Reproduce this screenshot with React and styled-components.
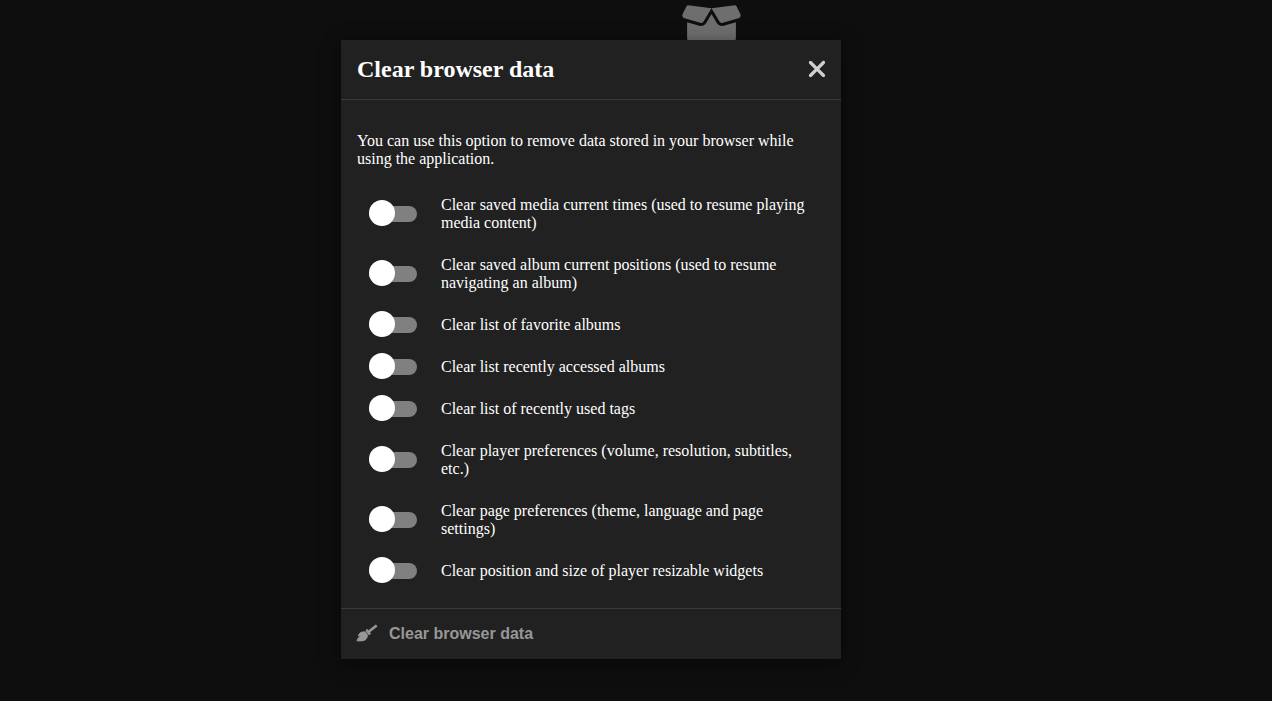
import React, { useState } from "react";
import styled, { createGlobalStyle } from "styled-components";
import { FaBroom } from "react-icons/fa";
import { FaBoxOpen, FaXmark } from "react-icons/fa6";

const GlobalStyle = createGlobalStyle`
  *, *::before, *::after { box-sizing: border-box; }
  body {
    margin: 0;
    background: #0e0e0e;
    color: #fff;
    font: 16px/18px "Liberation Serif", "Times New Roman", serif;
  }
`;

const Page = styled.div`
  display: grid;
  min-height: 100vh;
`;

const Background = styled.main`
  grid-area: 1 / 1;
  display: flex;
  justify-content: center;
  align-items: flex-start;
  padding: 2px 0 0 150px;
  color: #6e6e6e;
`;

const EmptyIcon = styled(FaBoxOpen)`
  width: 61px;
  height: 49px;
`;

const Overlay = styled.div`
  grid-area: 1 / 1;
  z-index: 1;
  display: flex;
  justify-content: center;
  align-items: flex-start;
  padding: 40px 90px 40px 0;
`;

const Dialog = styled.section`
  width: 100%;
  max-width: 500px;
  background: #212121;
  box-shadow: 0 4px 16px rgba(0, 0, 0, 0.5);
`;

const Header = styled.header`
  display: flex;
  align-items: center;
  justify-content: space-between;
  height: 60px;
  padding: 0 11px 2px 16px;
  border-bottom: 1px solid #3a3a3a;
`;

const Title = styled.h2`
  margin: 0;
  font-size: 24px;
  line-height: 28px;
`;

const CloseButton = styled.button`
  display: flex;
  padding: 0;
  border: 0;
  background: none;
  color: #d0d0d0;
  cursor: pointer;

  svg {
    width: 26px;
    height: 26px;
  }
`;

const Body = styled.div`
  padding: 16px;
`;

const Intro = styled.p`
  margin: 16px 0;
`;

const Options = styled.ul`
  margin: 0;
  padding: 0;
  list-style: none;
`;

const Option = styled.li`
  display: flex;
  align-items: center;
  gap: 24px;
  padding: 12px;
`;

const Toggle = styled.input.attrs({ type: "checkbox" })`
  appearance: none;
  position: relative;
  flex: none;
  width: 48px;
  height: 16px;
  margin: 0;
  border-radius: 8px;
  background: #808080;
  cursor: pointer;

  &::after {
    content: "";
    position: absolute;
    top: -6px;
    left: 0;
    width: 26px;
    height: 26px;
    border-radius: 50%;
    background: #fff;
  }

  &:checked {
    background: #c62828;
  }

  &:checked::after {
    left: 22px;
  }
`;

const Footer = styled.footer`
  display: flex;
  align-items: center;
  height: 51px;
  padding: 0 16px;
  border-top: 1px solid #3a3a3a;
`;

const ActionButton = styled.button`
  display: flex;
  align-items: flex-start;
  gap: 12px;
  padding: 0;
  border: 0;
  background: none;
  color: #fff;
  font: bold 16px/18px "Liberation Sans", Arial, sans-serif;
  cursor: pointer;

  &:disabled {
    color: #979797;
    cursor: default;
  }

  svg {
    width: 20px;
    height: 16px;
    overflow: visible;
    stroke-width: 24px;
  }
`;

const OPTIONS = [
  ["times", "Clear saved media current times (used to resume playing media content)"],
  ["positions", "Clear saved album current positions (used to resume navigating an album)"],
  ["favorites", "Clear list of favorite albums"],
  ["recent-albums", "Clear list recently accessed albums"],
  ["recent-tags", "Clear list of recently used tags"],
  ["player", "Clear player preferences (volume, resolution, subtitles, etc.)"],
  ["page", "Clear page preferences (theme, language and page settings)"],
  ["widgets", "Clear position and size of player resizable widgets"],
];

export default function App() {
  const [selected, setSelected] = useState({});
  const anySelected = Object.values(selected).some(Boolean);

  return (
    <>
      <GlobalStyle />
      <Page>
        <Background>
          <EmptyIcon aria-hidden="true" />
        </Background>
        <Overlay>
          <Dialog role="dialog" aria-labelledby="dialog-title">
            <Header>
              <Title id="dialog-title">Clear browser data</Title>
              <CloseButton type="button" aria-label="Close">
                <FaXmark />
              </CloseButton>
            </Header>
            <Body>
              <Intro>
                You can use this option to remove data stored in your browser while using the
                application.
              </Intro>
              <Options>
                {OPTIONS.map(([id, label]) => (
                  <Option key={id}>
                    <Toggle
                      id={id}
                      checked={!!selected[id]}
                      onChange={(e) => setSelected({ ...selected, [id]: e.target.checked })}
                    />
                    <label htmlFor={id}>{label}</label>
                  </Option>
                ))}
              </Options>
            </Body>
            <Footer>
              <ActionButton type="button" disabled={!anySelected}>
                <FaBroom />
                Clear browser data
              </ActionButton>
            </Footer>
          </Dialog>
        </Overlay>
      </Page>
    </>
  );
}
